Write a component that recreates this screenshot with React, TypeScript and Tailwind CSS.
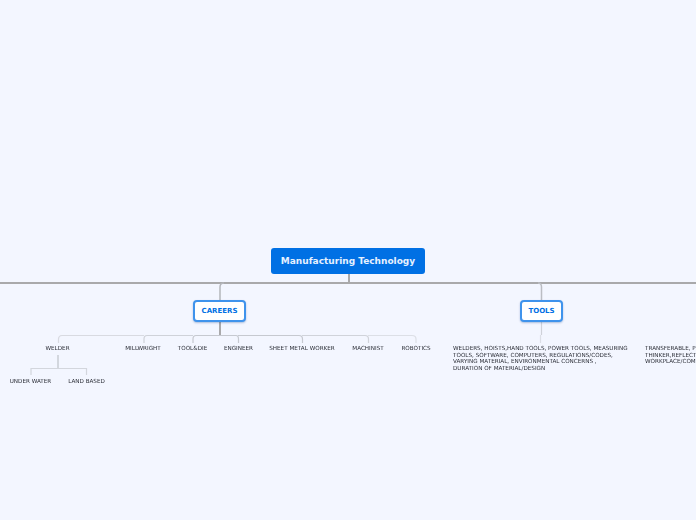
const font = "font-['DejaVu_Sans',sans-serif]"

const labels = [
  { text: 'WELDER', x: 57.500, y: 348 },
  { text: 'MILLWRIGHT', x: 143, y: 348 },
  { text: 'TOOL&DIE', x: 192.500, y: 348 },
  { text: 'ENGINEER', x: 238.500, y: 348 },
  { text: 'SHEET METAL WORKER', x: 302, y: 348 },
  { text: 'MACHINIST', x: 368, y: 348 },
  { text: 'ROBOTICS', x: 416, y: 348 },
  { text: 'UNDER WATER', x: 30.500, y: 381 },
  { text: 'LAND BASED', x: 86.500, y: 381 },
]

// the second half of lines 2 and 4 sits a little lower in the picture
const toolLines = [
  { left: 'WELDERS, HOISTS,', right: 'HAND TOOLS, POWER TOOLS, MEASURING', drop: false },
  { left: 'TOOLS, SOFTW', right: 'ARE, COMPUTERS, REGULATIONS/CODES,', drop: true },
  { left: 'VARYING MATERIAL, ', right: 'ENVIRONMENTAL CONCERNS ,', drop: false },
  { left: 'DURATION OF ', right: 'MATERIAL/DESIGN', drop: true },
]

const skillLines = ['TRANSFERABLE, PROBLEM', 'THINKER,REFLECTIVE', 'WORKPLACE/COMMUNICATION']

function Connectors() {
  return (
    <svg className="absolute inset-0" width="696" height="520" fill="none">
      <path d="M0 283H696M349 274V283" stroke="#a9a9ab" strokeWidth="2" />
      <path d="M220 301V287Q220 283 224 283" stroke="#b4b6bb" strokeWidth="1.500" />
      <path d="M541.500 301V287Q541.500 283 538 283" stroke="#bbbdc3" strokeWidth="1.500" />
      <path d="M220 321V336" stroke="#a9a9ab" strokeWidth="2" />
      <path d="M58.500 343V339.500Q58.500 335.500 62 335.500H144" stroke="#d8dae1" strokeWidth="1.200" />
      <path d="M144 343V339Q144 335.500 147 335.500H193" stroke="#cfd2d9" strokeWidth="1.200" />
      <path d="M193 343V339Q193 335.500 196 335.500H220" stroke="#c6c9d0" strokeWidth="1.200" />
      <path d="M220 335.500H236Q238.500 335.500 238.500 339V343" stroke="#c6c9d0" strokeWidth="1.200" />
      <path d="M238 335.500H299Q302.500 335.500 302.500 339V343" stroke="#c6c9d0" strokeWidth="1.200" />
      <path d="M302 335.500H365Q368.500 335.500 368.500 339V343" stroke="#d0d3da" strokeWidth="1.200" />
      <path d="M368 335.500H412Q416 335.500 416 339V343" stroke="#dcdfe6" strokeWidth="1.200" />
      <path d="M58 355V368" stroke="#c9ccd3" strokeWidth="1.500" />
      <path d="M31 375V368.500H86.500V375" stroke="#d3d6dd" strokeWidth="1.200" />
      <path d="M541.500 321V335" stroke="#cfd2d9" strokeWidth="1.200" />
      <path d="M540.500 335V343" stroke="#dcdfe6" strokeWidth="1.200" />
    </svg>
  )
}

function Branch({ text, x, width }: { text: string; x: number; width: number }) {
  return (
    <div
      className="absolute top-[300px] flex h-[21.500px] items-center justify-center rounded-[4px] border-2 border-[#3f93ec] bg-white text-[7px] font-bold text-[#0070e4] shadow-[0_1px_2px_rgba(0,60,140,0.3)]"
      style={{ left: x, width }}
    >
      {text}
    </div>
  )
}

export default function App() {
  return (
    <div className={`relative h-[520px] w-[696px] overflow-hidden bg-[#f3f6ff] ${font}`}>
      <Connectors />

      <div className="absolute left-[271px] top-[248px] flex h-[26px] w-[154px] items-center justify-center rounded-[3px] bg-[#0070e4] pt-[1px] text-[9px] font-bold whitespace-nowrap text-[#e6f1ff]">
        Manufacturing Technology
      </div>

      <Branch text="CAREERS" x={193} width={53} />
      <Branch text="TOOLS" x={520} width={43} />

      {/* own layer, so the small text gets grey antialiasing like the picture */}
      <div className="absolute inset-0 text-[5.650px] whitespace-nowrap text-[#2c2f38] will-change-transform">
        {labels.map((l) => (
          <div
            key={l.text}
            className="absolute -translate-x-1/2 -translate-y-1/2"
            style={{ left: l.x, top: l.y }}
          >
            {l.text}
          </div>
        ))}

        <div className="absolute left-[453px] top-[345px] leading-[6.600px]">
          {toolLines.map((line) => (
            <div key={line.right} className="whitespace-pre">
              {line.left}
              <span className={line.drop ? 'relative top-[0.500px]' : ''}>{line.right}</span>
            </div>
          ))}
        </div>

        <div className="absolute left-[645px] top-[345px] leading-[6.600px]">
          {skillLines.map((line) => (
            <div key={line}>{line}</div>
          ))}
        </div>
      </div>
    </div>
  )
}
